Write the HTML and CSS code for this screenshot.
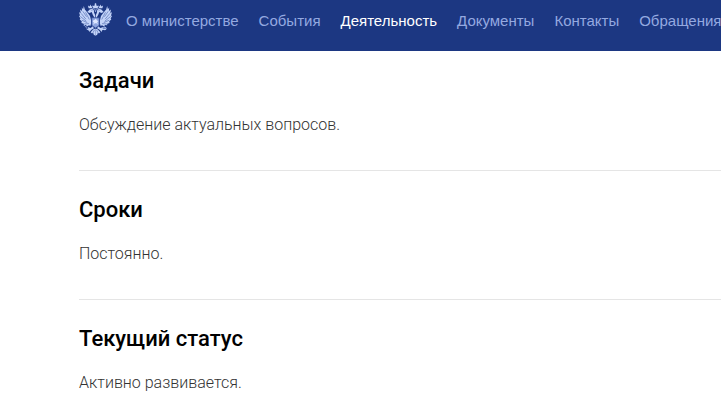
FILE: index.html
```html
<!DOCTYPE html>
<html lang="ru">
<head>
  <meta charset="UTF-8" />
  <title>Деятельность</title>
  <meta name="viewport" content="width=device-width, initial-scale=1" />
  <link rel="stylesheet" href="styles.css">
</head>
<body>

<header class="header">
  <a href="#" class="logo" aria-label="На главную">
    <svg class="eagle" viewBox="0 0 96 96" aria-hidden="true">
      <!-- wings -->
      <g id="wing">
        <path class="light" d="M35 50 L32 38 L25 28 L17 19 L14 9 L12 18 L8 13 L9 23 L3 19 L5 29 L0 27 L3 36 L0 38 L4 45 L2 48 L8 53 L7 58 L14 60 L14 65 L21 64 L22 69 L29 65 L33 67 L35 60 Z"/>
        <path class="line" d="M11 24 L22 40 M6 30 L20 47 M4 39 L21 53 M8 50 L24 57 M15 61 L29 60 M19 27 L30 48"/>
        <!-- head and neck -->
        <path class="light" d="M45 43 L40 34 L37 26 L31 29 L24 26 L31 19 L38 17 L43 20 L44 28 L47 35 L47 44 Z"/>
        <path class="light" d="M28 15 L26 7 L31 10 L33 4 L36 10 L40 8 L37 15 Z"/>
        <path class="line" d="M36 21 L39 21"/>
        <!-- leg -->
        <path class="light" d="M41 67 L34 73 L25 70 L27 75 L21 78 L29 79 L30 84 L36 78 L43 74 Z"/>
        <!-- tail feathers -->
        <path class="light" d="M48 74 L42 76 L34 85 L38 89 L41 86 L43 92 L48 95 Z"/>
        <path class="line" d="M45 78 L41 86"/>
      </g>
      <use href="#wing" transform="matrix(-1 0 0 1 96 0)"/>
      <!-- big crown -->
      <path class="light" d="M42 15 L39 7 L44 9 L46 5 L45 2 L47 2 L47 0 L49 0 L49 2 L51 2 L50 5 L52 9 L57 7 L54 15 Z"/>
      <path class="ribbon" d="M38 15 L46 18 L48 26 L50 18 L58 15"/>
      <!-- sceptre and orb -->
      <path class="ribbon" d="M29 81 L15 64 M14 65 L18 61"/>
      <circle class="light" cx="75" cy="74" r="5"/>
      <path class="line" d="M70 74 H80 M75 69 V74"/>
      <!-- shield -->
      <path class="shield" d="M37 43 H59 V62 Q59 68 53 69 L48 73 L43 69 Q37 68 37 62 Z"/>
      <path class="rider" d="M42 50 L46 49 L49 45 L52 50 L56 53 L53 56 L55 63 L51 59 L46 59 L41 64 L43 57 L40 54 Z"/>
    </svg>
  </a>
  <nav class="menu">
    <a href="#">О министерстве</a>
    <a href="#">События</a>
    <a href="#" class="active">Деятельность</a>
    <a href="#">Документы</a>
    <a href="#">Контакты</a>
    <a href="#">Обращения</a>
  </nav>
</header>

<main class="content">
  <section class="block">
    <h2>Задачи</h2>
    <p>Обсуждение актуальных вопросов.</p>
  </section>
  <section class="block">
    <h2>Сроки</h2>
    <p>Постоянно.</p>
  </section>
  <section class="block">
    <h2>Текущий статус</h2>
    <p>Активно развивается.</p>
  </section>
</main>

</body>
</html>
```

FILE: styles.css
```css
body {
  margin: 0;
  font-family: Roboto, 'Liberation Sans', sans-serif;
  background: #fff;
  color: #000;
}
.header {
  display: flex;
  align-items: flex-start;
  gap: 14px;
  padding: 3px 0 12px 79px;
  background: #1c3782;
}
.logo {
  display: block;
}
.eagle {
  display: block;
  width: 33px;
  height: 33px;
}
.eagle .light {
  fill: #c3d3f8;
}
.eagle .line {
  fill: none;
  stroke: #5872b4;
  stroke-width: 2;
}
.eagle .ribbon {
  fill: none;
  stroke: #a9bced;
  stroke-width: 2;
}
.eagle .shield {
  fill: #8ea5df;
  stroke: #304c97;
  stroke-width: 2;
}
.eagle .rider {
  fill: #dfe8ff;
}
.menu {
  display: flex;
  gap: 20px;
  font-family: 'Liberation Sans', Arial, sans-serif;
  font-size: 15px;
  line-height: 36px;
  white-space: nowrap;
}
.menu a {
  color: #94a9e0;
  text-decoration: none;
}
.menu a.active {
  color: #fff;
}
.content {
  padding-left: 79px;
}
.block {
  padding: 23px 0 33px;
  border-bottom: 1px solid #e5e5e5;
}
.block:first-child {
  padding-top: 14px;
}
.block:last-child {
  padding-bottom: 0;
  border-bottom: none;
}
.block h2 {
  margin: 0 0 16px;
  font-size: 22px;
  font-weight: 500;
  line-height: 32px;
}
.block p {
  margin: 0;
  font-size: 16px;
  font-weight: 300;
  line-height: 24px;
  color: #333;
}
```
